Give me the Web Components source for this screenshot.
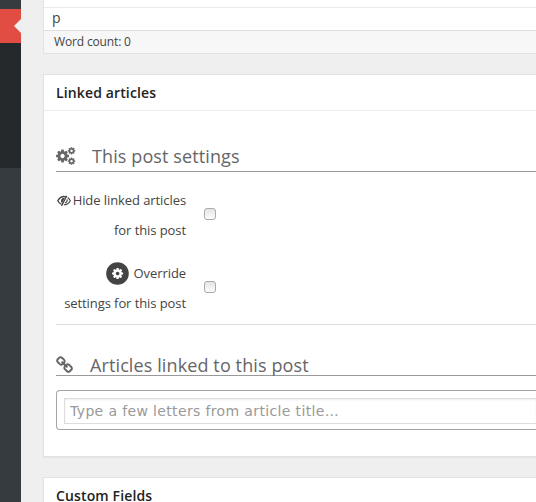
<!DOCTYPE html>
<html lang="en">
<head>
<meta charset="utf-8">
<title>Edit post</title>
<style>
html,body{margin:0;height:100%;overflow:hidden}
body{background:#efefef;font-family:"Open Sans",sans-serif;color:#444;font-size:13px}
</style>
</head>
<body>
<post-editor></post-editor>
<script>
const COG='M1024 896q0-106-75-181t-181-75-181 75-75 181 75 181 181 75 181-75 75-181zm512-109v222q0 12-8 23t-20 13l-185 28q-19 54-39 91 35 50 107 138 10 12 10 25t-9 23q-27 37-99 108t-94 71q-12 0-26-9l-138-108q-44 23-91 38-16 136-29 186-7 28-36 28h-222q-14 0-24.5-8.5t-11.5-21.5l-28-184q-49-16-90-37l-141 107q-10 9-25 9-14 0-25-11-126-114-165-168-7-10-7-23 0-12 8-23 15-21 51-66.5t54-70.5q-27-50-41-99l-183-27q-13-2-21-12.5t-8-23.5v-222q0-12 8-23t19-13l186-28q14-46 39-92-40-57-107-138-10-12-10-24 0-10 9-23 26-36 98.5-107.5t94.5-71.5q13 0 26 10l138 107q44-23 91-38 16-136 29-186 7-28 36-28h222q14 0 24.5 8.5t11.5 21.5l28 184q49 16 90 37l142-107q9-9 24-9 13 0 25 10 129 119 165 170 7 8 7 22 0 12-8 23-15 21-51 66.5t-54 70.5q26 50 41 98l183 28q13 2 21 12.5t8 23.5z';
const LINK='M1456 1216q0-40-28-68l-208-208q-28-28-68-28-42 0-72 32 3 3 19 18.5t21.5 21.5 15 19 13 25.5 3.5 27.5q0 40-28 68t-68 28q-15 0-27.5-3.5t-25.5-13-19-15-21.5-21.5-18.5-19q-33 31-33 73 0 40 28 68l206 207q27 27 68 27 40 0 68-26l147-146q28-28 28-67zm-703-705q0-40-28-68l-206-207q-28-28-68-28-39 0-68 27l-147 146q-28 28-28 67 0 40 28 68l208 208q27 27 68 27 42 0 72-31-3-3-19-18.5t-21.5-21.5-15-19-13-25.5-3.5-27.5q0-40 28-68t68-28q15 0 27.5 3.5t25.5 13 19 15 21.5 21.5 18.5 19q33-31 33-73zm895 705q0 120-85 203l-147 146q-83 83-203 83-121 0-204-85l-206-207q-83-83-83-203 0-123 88-209l-88-88q-86 88-208 88-120 0-204-84l-208-208q-84-84-84-204t85-203l147-146q83-83 203-83 121 0 204 85l206 207q83 83 83 203 0 123-88 209l88 88q86-88 208-88 120 0 204 84l208 208q84 84 84 204z';
const ICONS={
 cogs:`<svg width="20" height="18" viewBox="0 0 1970 1792"><path transform="translate(0 149) scale(.8333)" d="${COG}"/><path transform="translate(1170 -46) scale(.48)" d="${COG}"/><path transform="translate(1170 978) scale(.48)" d="${COG}"/></svg>`,
 link:`<svg width="17" height="17" viewBox="0 0 1664 1664"><path d="${LINK}"/></svg>`,
 eye:`<svg width="14" height="12" viewBox="0 0 14 12" fill="none" stroke="currentColor"><path d="M9 1.8C4.800 .7 2 3.500 .8 5.800C1.600 7.400 2.900 8.700 4.500 9.400" stroke-width="1.300"/><path d="M7.800 2.700C5.500 2.300 4 4 4 5.700C4 6.900 4.500 7.700 5.200 8.200Z" fill="currentColor" stroke="none"/><path d="M9.800 .8L4.500 11" stroke-width="1.300"/><path d="M10.700 2.500C12 3.300 12.800 4.600 13.300 5.700C12.100 8.100 9.900 9.800 6.800 9.800M10.200 4.400C10.400 6.200 9.500 7.500 8 8.100" stroke-width="1.100"/></svg>`,
 gear:`<svg width="23" height="23" viewBox="0 0 23 23"><circle cx="11.500" cy="11.500" r="11.300"/><path fill="#fff" transform="translate(6.100 5.100) scale(.00716)" d="${COG}"/></svg>`
};
function define(name,html){
 customElements.define(name,class extends HTMLElement{
  constructor(){super();this.attachShadow({mode:'open'}).innerHTML=html;}
 });
}
customElements.define('ui-icon',class extends HTMLElement{
 connectedCallback(){
  if(!this.shadowRoot)this.attachShadow({mode:'open'}).innerHTML=`<style>:host{display:inline-block;line-height:0}svg{display:block;fill:currentColor}svg[fill=none]{fill:none}</style>${ICONS[this.getAttribute('name')]}`;
 }
});
define('admin-menu',`<style>
:host{display:flex;flex-direction:column;width:21px;background:#363b3f;flex:none}
.gap{height:9px}
.current{height:34px;background:#e14d43;display:flex;justify-content:flex-end;align-items:center}
.current i{width:7px;height:14px;background:#efefef;clip-path:polygon(100% 0,0 50%,100% 100%)}
.sub{height:125px;background:#26292c}
</style><div class="gap"></div><div class="current"><i></i></div><div class="sub"></div>`);
define('editor-tail',`<style>
:host{display:block;box-sizing:border-box;height:54px;border:1px solid #e2e2e2;border-width:0 0 1px 1px;background:#fff}
.tools{height:7px;border-bottom:1px solid #eaeaea}
.path{height:22px;line-height:20px;font-size:14px;padding-left:8px;border-bottom:1px solid #dedede}
.count{height:22px;line-height:21px;background:#f7f7f7;font-size:12px;padding-left:10px;letter-spacing:-.15px}
</style><div class="tools"></div><div class="path"><slot name="path"></slot></div><div class="count"><slot name="count"></slot></div>`);
define('meta-box',`<style>
:host{display:block;box-sizing:border-box;border:1px solid #e2e2e2;border-right:0;background:#fff;box-shadow:0 1px 1px rgba(0,0,0,.04)}
header{height:35px;line-height:36px;padding-left:12px;font-weight:600;font-size:14px;color:#222;border-bottom:1px solid #eee;letter-spacing:.13px}
.body{padding-left:12px}
</style><header><slot name="title"></slot></header><div class="body"><slot></slot></div>`);
define('section-title',`<style>
:host{display:flex;align-items:center;box-sizing:border-box;border-bottom:1px solid #999;color:#666;font-size:18px;letter-spacing:.11px;height:31px}
::slotted(ui-icon){flex:none}
.label{white-space:nowrap}
</style><slot name="icon"></slot><span class="label"><slot></slot></span>`);
define('setting-row',`<style>
:host{display:flex;align-items:center;height:60px;line-height:30px;letter-spacing:-.08px}
.label{width:130px;text-align:right;white-space:nowrap}
input{appearance:none;flex:none;box-sizing:border-box;width:12px;height:12px;margin:0 0 2px 18px;border:1px solid #aaa;border-radius:3px;background:linear-gradient(#e5e5e2,#fcfcfc)}
</style><div class="label"><slot></slot></div><input type="checkbox">`);
define('article-picker',`<style>
:host{display:block;box-sizing:border-box;height:40px;padding:7px 0 6px 7px;border:1px solid #a5a5a5;border-right:0;border-radius:4px 0 0 4px}
input{display:block;width:100%;box-sizing:border-box;height:26px;border:1px solid #ddd;border-right:0;box-shadow:inset 0 1px 2px rgba(0,0,0,.07);outline:0;padding:1px 5px;font:14px "DejaVu Sans",sans-serif;letter-spacing:.36px;margin:0;background:#fff}
input::placeholder{color:#999;opacity:1}
</style><input placeholder="Type a few letters from article title…">`);
define('post-editor',`<style>
:host{display:flex;height:502px;overflow:hidden}
main{flex:1;min-width:0;padding-left:22px;display:flex;flex-direction:column}
.linked{margin-top:20px;height:383px}
.custom{margin-top:20px;flex:1;min-height:0;overflow:hidden;border-bottom:0}
editor-tail,.linked{flex:none}
.one{margin-top:30px}
.one ui-icon{margin-right:16px}
.two{margin-top:29px;height:22px}
.two ui-icon{margin:0 17px 0 0}
.rows{box-sizing:border-box;padding-top:13px;height:153px;border-bottom:1px solid #ddd}
.rows setting-row + setting-row{margin-top:13px}
.eye{vertical-align:-2px;margin-right:2px}
.gear{vertical-align:-7px;margin-right:5px;height:23px}
article-picker{margin-top:14px}
</style>
<admin-menu></admin-menu>
<main>
<editor-tail><span slot="path">p</span><span slot="count">Word count: 0</span></editor-tail>
<meta-box class="linked"><span slot="title">Linked articles</span>
<section-title class="one"><ui-icon slot="icon" name="cogs"></ui-icon>This post settings</section-title>
<div class="rows">
<setting-row><ui-icon class="eye" name="eye"></ui-icon>Hide linked articles<br>for this post</setting-row>
<setting-row><ui-icon class="gear" name="gear"></ui-icon>Override<br>settings for this post</setting-row>
</div>
<section-title class="two"><ui-icon slot="icon" name="link"></ui-icon>Articles linked to this post</section-title>
<article-picker></article-picker>
</meta-box>
<meta-box class="custom"><span slot="title">Custom Fields</span></meta-box>
</main>`);
</script>
</body>
</html>
